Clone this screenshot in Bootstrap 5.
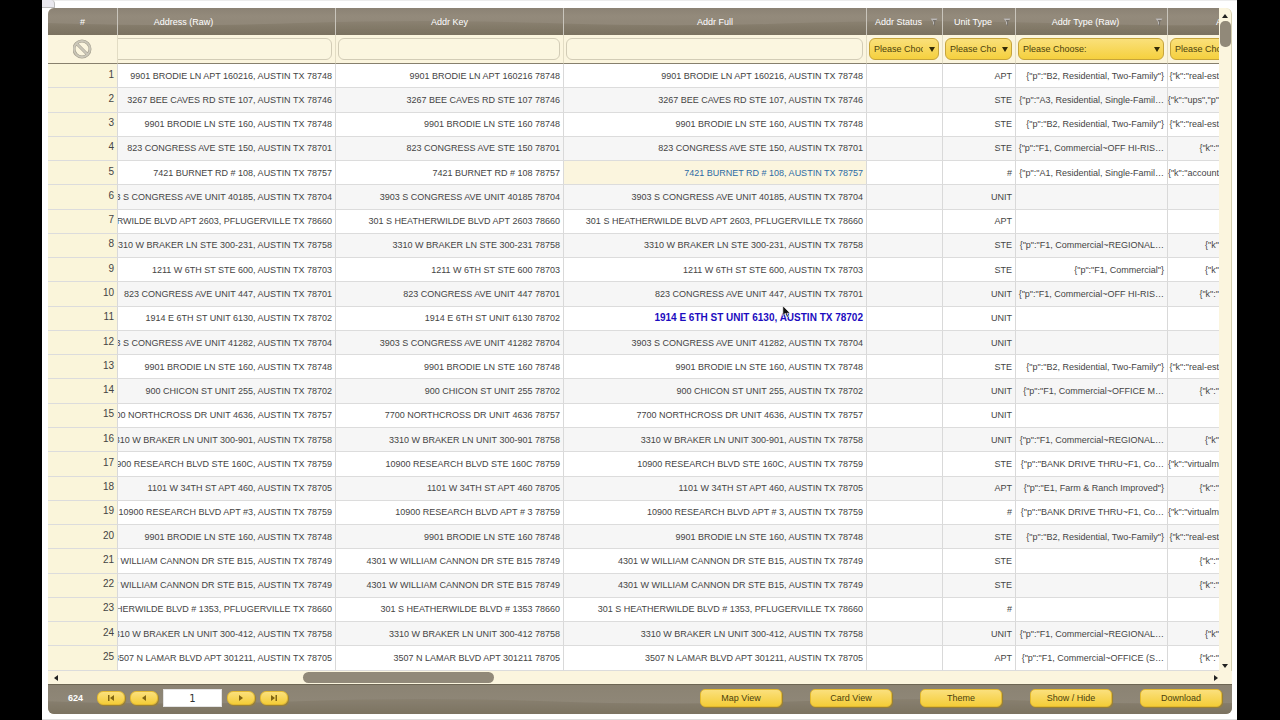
<!DOCTYPE html>
<html lang="en">
<head>
<meta charset="utf-8">
<meta name="viewport" content="width=device-width, initial-scale=1">
<title>Address grid</title>
<link href="https://cdn.jsdelivr.net/npm/bootstrap@5.3.0/dist/css/bootstrap.min.css" rel="stylesheet">
<style>
:root{--cream:#fbf5de;--line:#d9d9d9;--taupe:#918979;--ui:"Liberation Sans",Arial,sans-serif;
--wave:url("data:image/svg+xml,%3Csvg xmlns='http://www.w3.org/2000/svg' width='500' height='100' viewBox='0 0 500 100' preserveAspectRatio='none'%3E%3Cdefs%3E%3ClinearGradient id='g' x1='0' y1='0' x2='0' y2='1'%3E%3Cstop offset='0' stop-color='%23766d5a' stop-opacity='.25'/%3E%3Cstop offset='1' stop-color='%23766d5a' stop-opacity='.8'/%3E%3C/linearGradient%3E%3C/defs%3E%3Cpath fill='url(%23g)' d='M0 56C80 66 170 66 250 56S420 46 500 56V100H0Z'/%3E%3C/svg%3E")}
body{background:#000;font-family:var(--ui);font-size:9px;line-height:12px;color:#444}
.sheet{margin:0 43px 0 42px;padding:7px 5px 5px 6px;background:#fff;border-top:1px solid #ececec;border-bottom:1px solid #ddd}
.corner-tab{top:0;left:42px;width:13px;height:8px;background:#e9e8ee;border:1px solid #bbb;border-width:0 1px 1px 0;border-radius:0 4px 0 0}
.panel{border-radius:6px;overflow:hidden;background:var(--cream)}
.data-grid{flex:1 1 0;width:100%;table-layout:fixed;border-collapse:separate;border-spacing:0;min-width:0}
.data-grid th,.data-grid td{padding:0}
.c-num{width:70px}.c-raw{width:218px}.c-key{width:228px}.c-status{width:76px}.c-unit{width:73px}.c-type{width:152px}.c-more{width:51px}
.heads{background:var(--wave) 0 0/500px 100%,linear-gradient(#8b8274,#938a7b 30%,#8d8475)}
.heads th{height:27px;color:#fff;font-weight:400;border-right:1px solid #c9c5bc}
.heads th:last-child,.filters td:last-child,tbody td:last-child{border-right:0!important}
.filters td{height:29px;background:var(--cream);border-right:1px solid #e2dcc4;border-bottom:1px solid #87806d}
.filters .box{padding:0 3px 0 2px;overflow:hidden}
.fld{display:block;width:100%;height:22px;border:1px solid #d2ccb6;border-radius:6px;background:#fbf6e0;padding:0 4px;font-size:9px}
.pick{display:block;width:100%;height:22px;border:1px solid #c6a43a;border-radius:6px;padding:0 15px 0 4px;font-size:9px;line-height:20px;color:#4b3f0c;appearance:none;
background:url("data:image/svg+xml,%3Csvg xmlns='http://www.w3.org/2000/svg' width='6' height='5'%3E%3Cpath fill='%23332b08' d='M0 0h6L3 5z'/%3E%3C/svg%3E") no-repeat right 3px center,linear-gradient(#fae07a,#f5d03e)}
tbody th,tbody td{height:24px;border-right:1px solid var(--line);border-bottom:1px solid #dcdcdc;background:#fff}
tbody tr:nth-child(even) td{background:#f6f6f6}
tbody tr th{background:#faf5da;font-weight:400;font-size:10px;text-align:right}
tbody th .num{padding:0 3px 2px 0}
.clip{display:flex;justify-content:flex-end;overflow:hidden;white-space:nowrap;padding-right:3px}
.c-end .clip{padding-right:0}
tbody tr td.picked{background:var(--cream);color:#2d6ba5}
.edited{color:#1c0cc0;font-weight:700;font-size:10px}
.pointer{right:75px;top:-7px}
.vbar{width:13px;border-right:1px solid #d4cfae;border-radius:0 6px 0 0}
.vthumb{width:11px;height:26px;border-radius:5px;background:var(--taupe)}
.hbar{height:13px;padding:0 14px 0 6px}
.hthumb{width:16.5%;height:11px;margin-left:21.2%;border-radius:6px;background:var(--taupe)}
.foot{padding:4px 10px 7px 0;background:var(--wave) 0 0/500px 100%,linear-gradient(#8b8373,#91897a);border-top:1px solid #6d6654}
.total{width:35px;margin-right:14px;color:#fff;text-align:right;font-weight:700}
.btn.gold{padding:0;border:1px solid #e3b92f;background:linear-gradient(#fbe07d,#f4cd38);color:#4b3f0c;box-shadow:1px 1px 1px #9b8132;font-size:9px;line-height:16px}
.wide-btn{width:82px;height:18px;border-radius:5px}
.nav-btn{width:28px;height:14px;border-radius:6px;display:flex;align-items:center;justify-content:center}
.page-no{width:59px;height:18px;border:1px solid #e4e4e4;background:#fff;text-align:center;font:10px "DejaVu Sans",sans-serif;color:#333;padding:0}
svg{display:block;flex:none}
</style>
</head>
<body>
<main class="sheet position-relative min-vh-100 d-flex flex-column">
<section class="panel d-flex flex-column flex-grow-1">
<div class="d-flex flex-grow-1">
<table class="data-grid">
<colgroup><col class="c-num"><col class="c-raw"><col class="c-key"><col><col class="c-status"><col class="c-unit"><col class="c-type"><col class="c-more"></colgroup>
<thead>
<tr class="heads text-center">
<th scope="col">#</th>
<th scope="col"><div style="padding-right:86px">Address (Raw)</div></th>
<th scope="col">Addr Key</th>
<th scope="col">Addr Full</th>
<th scope="col"><div class="d-flex align-items-center pe-1"><span class="flex-grow-1">Addr Status</span><svg width="8" height="8" viewBox="0 0 8 8"><path d="M.5.5h7L5 4v4L3 6.500V4z" fill="#77726b"/><path d="M.5.5h7l-1 1.500h-4L4 4v3L3 6V4z" fill="#bdbab8"/></svg></div></th>
<th scope="col"><div class="d-flex align-items-center pe-1"><span class="flex-grow-1">Unit Type</span><svg width="8" height="8" viewBox="0 0 8 8"><path d="M.5.5h7L5 4v4L3 6.500V4z" fill="#77726b"/><path d="M.5.5h7l-1 1.500h-4L4 4v3L3 6V4z" fill="#bdbab8"/></svg></div></th>
<th scope="col"><div class="d-flex align-items-center pe-1"><span class="flex-grow-1">Addr Type (Raw)</span><svg width="8" height="8" viewBox="0 0 8 8"><path d="M.5.5h7L5 4v4L3 6.500V4z" fill="#77726b"/><path d="M.5.5h7l-1 1.500h-4L4 4v3L3 6V4z" fill="#bdbab8"/></svg></div></th>
<th scope="col"><div class="overflow-hidden text-start ps-5">A</div></th>
</tr>
<tr class="filters">
<td><button type="button" class="btn p-0 border-0 d-block mx-auto" aria-label="Clear filters"><svg width="20" height="20" viewBox="0 0 20 20" fill="none"><circle cx="9" cy="10" r="8" stroke="#a5a08f" stroke-width="3"/><path d="M3.500 4.500l11 11" stroke="#a5a08f" stroke-width="3"/><circle cx="9" cy="10" r="8" stroke="#cbc7b9" stroke-width="1.800"/><path d="M3.500 4.500l11 11" stroke="#cbc7b9" stroke-width="1.800"/></svg></button></td>
<td><div class="box"><div style="margin-left:-10px"><input class="fld" aria-label="Filter address"></div></div></td>
<td><div class="box"><input class="fld" aria-label="Filter key"></div></td>
<td><div class="box"><input class="fld" aria-label="Filter full address"></div></td>
<td><div class="box"><select class="pick" aria-label="Addr Status"><option>Please Choose:</option></select></div></td>
<td><div class="box"><select class="pick" aria-label="Unit Type"><option>Please Choose:</option></select></div></td>
<td><div class="box"><select class="pick" aria-label="Addr Type"><option>Please Choose:</option></select></div></td>
<td><div class="box pe-0"><div style="width:140px"><select class="pick" aria-label="Keywords"><option>Please Choose:</option></select></div></div></td>
</tr>
</thead>
<tbody id="rows"></tbody>
</table>
<div class="vbar d-flex flex-column align-items-center pt-1">
<svg width="6" height="9" viewBox="0 0 6 9"><path d="M0 6h6L3 2z" fill="#222"/></svg>
<div class="vthumb"></div>
<svg class="mt-auto" width="6" height="9" viewBox="0 0 6 9"><path d="M0 2h6L3 6z" fill="#222"/></svg>
</div>
</div>
<div class="hbar d-flex align-items-center">
<svg width="4" height="6" viewBox="0 0 4 6"><path d="M4 0v6L0 3z" fill="#222"/></svg>
<div class="flex-grow-1"><div class="hthumb"></div></div>
<svg width="4" height="6" viewBox="0 0 4 6"><path d="M0 0v6l4-3z" fill="#222"/></svg>
</div>
<footer class="foot d-flex align-items-center">
<span class="total">624</span>
<div class="d-flex align-items-center" style="gap:5px">
<button type="button" class="btn gold nav-btn" aria-label="First page"><svg width="8" height="6" viewBox="0 0 8 6" fill="#806514"><path d="M1 0h1.500v6H1zM7 0v6L3 3z"/></svg></button>
<button type="button" class="btn gold nav-btn" aria-label="Previous page"><svg width="8" height="6" viewBox="0 0 8 6" fill="#806514"><path d="M6 0v6L2 3z"/></svg></button>
<input class="page-no" value="1" aria-label="Page">
<button type="button" class="btn gold nav-btn" aria-label="Next page"><svg width="8" height="6" viewBox="0 0 8 6" fill="#806514"><path d="M2 0v6l4-3z"/></svg></button>
<button type="button" class="btn gold nav-btn" aria-label="Last page"><svg width="8" height="6" viewBox="0 0 8 6" fill="#806514"><path d="M1 0v6l4-3zM5.500 0H7v6H5.500z"/></svg></button>
</div>
<div class="d-flex ms-auto" style="gap:28px">
<button type="button" class="btn gold wide-btn">Map View</button>
<button type="button" class="btn gold wide-btn">Card View</button>
<button type="button" class="btn gold wide-btn">Theme</button>
<button type="button" class="btn gold wide-btn">Show / Hide</button>
<button type="button" class="btn gold wide-btn">Download</button>
</div>
</footer>
</section>
</main>
<div class="corner-tab position-absolute"></div>
<script>
// street | city | zip | unit type | property type | keywords
const B2='{"p":"B2, Residential, Two-Family"}', RE='{"k":"real-est', K='{"k"', KC='{"k":"', VM='{"k":"virtualm';
const HI='{"p":"F1, Commercial~OFF HI-RIS…', REG='{"p":"F1, Commercial~REGIONAL…', BANK='{"p":"BANK DRIVE THRU~F1, Co…';
const data=[
['9901 BRODIE LN APT 160216','AUSTIN','78748','APT',B2,RE],
['3267 BEE CAVES RD STE 107','AUSTIN','78746','STE','{"p":"A3, Residential, Single-Famil…','{"k":"ups","p"'],
['9901 BRODIE LN STE 160','AUSTIN','78748','STE',B2,RE],
['823 CONGRESS AVE STE 150','AUSTIN','78701','STE',HI,KC],
['7421 BURNET RD # 108','AUSTIN','78757','#','{"p":"A1, Residential, Single-Famil…','{"k":"account'],
['3903 S CONGRESS AVE UNIT 40185','AUSTIN','78704','UNIT','',''],
['301 S HEATHERWILDE BLVD APT 2603','PFLUGERVILLE','78660','APT','',''],
['3310 W BRAKER LN STE 300-231','AUSTIN','78758','STE',REG,K],
['1211 W 6TH ST STE 600','AUSTIN','78703','STE','{"p":"F1, Commercial"}',K],
['823 CONGRESS AVE UNIT 447','AUSTIN','78701','UNIT',HI,KC],
['1914 E 6TH ST UNIT 6130','AUSTIN','78702','UNIT','',''],
['3903 S CONGRESS AVE UNIT 41282','AUSTIN','78704','UNIT','',''],
['9901 BRODIE LN STE 160','AUSTIN','78748','STE',B2,RE],
['900 CHICON ST UNIT 255','AUSTIN','78702','UNIT','{"p":"F1, Commercial~OFFICE M…',KC],
['7700 NORTHCROSS DR UNIT 4636','AUSTIN','78757','UNIT','',''],
['3310 W BRAKER LN UNIT 300-901','AUSTIN','78758','UNIT',REG,K],
['10900 RESEARCH BLVD STE 160C','AUSTIN','78759','STE',BANK,VM],
['1101 W 34TH ST APT 460','AUSTIN','78705','APT','{"p":"E1, Farm & Ranch Improved"}',KC],
['10900 RESEARCH BLVD APT # 3','AUSTIN','78759','#',BANK,VM],
['9901 BRODIE LN STE 160','AUSTIN','78748','STE',B2,RE],
['4301 W WILLIAM CANNON DR STE B15','AUSTIN','78749','STE','',KC],
['4301 W WILLIAM CANNON DR STE B15','AUSTIN','78749','STE','',KC],
['301 S HEATHERWILDE BLVD # 1353','PFLUGERVILLE','78660','#','',''],
['3310 W BRAKER LN UNIT 300-412','AUSTIN','78758','UNIT',REG,K],
['3507 N LAMAR BLVD APT 301211','AUSTIN','78705','APT','{"p":"F1, Commercial~OFFICE (S…',KC]];
const pointer='<svg class="pointer position-absolute" width="9" height="14" viewBox="0 0 11 17"><path d="M1 1v12l3-3 2 5 2-1-2-4h4z" fill="#111" stroke="#fff" stroke-width=".8"/></svg>';
const cell=(text,cls='')=>`<td class="${cls}"><div class="clip">${text?`<span>${text.replace('&','&amp;')}</span>`:''}</div></td>`;
document.getElementById('rows').innerHTML=data.map(([street,city,zip,unit,type,keys],i)=>{
  const n=i+1, full=`${street}, ${city} TX ${zip}`;
  const raw=full.replace('# 3,','#3,');
  const fullCell=n===11?`<td class="edited"><div class="position-relative"><div class="clip"><span>${full}</span></div>${pointer}</div></td>`:cell(full,n===5?'picked':'');
  return `<tr><th scope="row"><div class="num">${n}</div></th>${cell(raw)}${cell(`${street} ${zip}`)}${fullCell}${cell('')}${cell(unit)}${cell(type)}${cell(keys,'c-end')}</tr>`;
}).join('');
</script>
<script src="https://cdn.jsdelivr.net/npm/bootstrap@5.3.0/dist/js/bootstrap.bundle.min.js"></script>
</body>
</html>
